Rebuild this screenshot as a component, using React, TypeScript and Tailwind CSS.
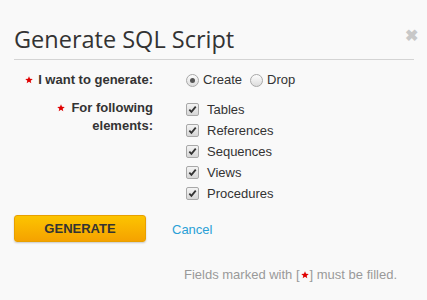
import { useState } from 'react';

function Star({ className = '' }: { className?: string }) {
  return (
    <svg className={className} width="8" height="8" viewBox="0 0 10 10">
      <path
        d="M5 0.3l1.3 3.1 3.4 0.2-2.6 2.2 0.8 3.3L5 7.3 2.1 9.1l0.8-3.3L0.3 3.6l3.4-0.2z"
        fill="#e00000"
      />
    </svg>
  );
}

function Radio({ checked }: { checked: boolean }) {
  return (
    <span className="w-[13px] h-[13px] rounded-full border border-[#a8a8a8] bg-gradient-to-b from-[#fdfdfd] to-[#dcdcdc] flex items-center justify-center">
      {checked && <span className="w-[5px] h-[5px] rounded-full bg-[#555]" />}
    </span>
  );
}

function Check() {
  return (
    <span className="w-[13px] h-[13px] rounded-[2px] border border-[#a8a8a8] bg-gradient-to-b from-[#f4f4f4] to-[#d6d6d6] flex items-center justify-center">
      <svg width="9" height="9" viewBox="0 0 10 10">
        <path d="M1.5 5.2l2.3 2.4L8.6 1.8" fill="none" stroke="#333" strokeWidth="2" />
      </svg>
    </span>
  );
}

const elements = ['Tables', 'References', 'Sequences', 'Views', 'Procedures'];

export default function App() {
  const [mode, setMode] = useState<'create' | 'drop'>('create');

  return (
    <div className="w-[427px] h-[300px] bg-[#f9f9f9] px-[14px] pt-[25px] font-['Liberation_Sans',Arial,sans-serif] text-[13px] text-[#333]">
      {/* Header */}
      <div className="flex items-start justify-between border-b border-[#d4d4d4] pb-[6px] w-[400px]">
        <h1 className="font-['Open_Sans',sans-serif] text-[23.5px] leading-[28px] text-[#333]">
          Generate SQL Script
        </h1>
        <span className="text-[#c8c8c8] text-[16px] font-bold leading-none mt-[3px] mr-[-4px]">✖</span>
      </div>

      {/* Form */}
      <div className="grid grid-cols-[139px_1fr] gap-x-[33px] mt-[12px]">
        <div className="flex items-center justify-end gap-[5px] font-bold h-[16px]">
          <Star />
          <span>I want to generate:</span>
        </div>
        <div className="flex items-center gap-[8px] h-[16px]">
          <button type="button" className="flex items-center gap-[4px]" onClick={() => setMode('create')}>
            <Radio checked={mode === 'create'} />
            <span>Create</span>
          </button>
          <button type="button" className="flex items-center gap-[4px]" onClick={() => setMode('drop')}>
            <Radio checked={mode === 'drop'} />
            <span>Drop</span>
          </button>
        </div>

        <div className="flex justify-end gap-[6px] font-bold text-right mt-[11px] leading-[18px]">
          <Star className="mt-[5px] shrink-0" />
          <span>
            For following
            <br />
            elements:
          </span>
        </div>
        <div className="flex flex-col mt-[11px]">
          {elements.map((el) => (
            <label key={el} className="flex items-center gap-[8px] h-[21px]">
              <Check />
              <span>{el}</span>
            </label>
          ))}
        </div>
      </div>

      {/* Actions */}
      <div className="flex items-center gap-[26px] mt-[11px]">
        <button
          type="button"
          className="w-[132px] h-[27px] rounded-[3px] bg-gradient-to-b from-[#fcc400] to-[#f5a200] border border-[#e8a000] shadow-[0_1px_2px_rgba(0,0,0,0.2)] font-bold text-[13px] text-[#333]"
        >
          GENERATE
        </button>
        <a href="#" className="text-[#2aa0d6] mt-[2px]">Cancel</a>
      </div>

      {/* Footer */}
      <div className="flex justify-end items-center mt-[23px] pr-[16px] text-[13px] text-[#999]">
        Fields marked with [<Star className="mx-[1px]" />] must be filled.
      </div>
    </div>
  );
}
